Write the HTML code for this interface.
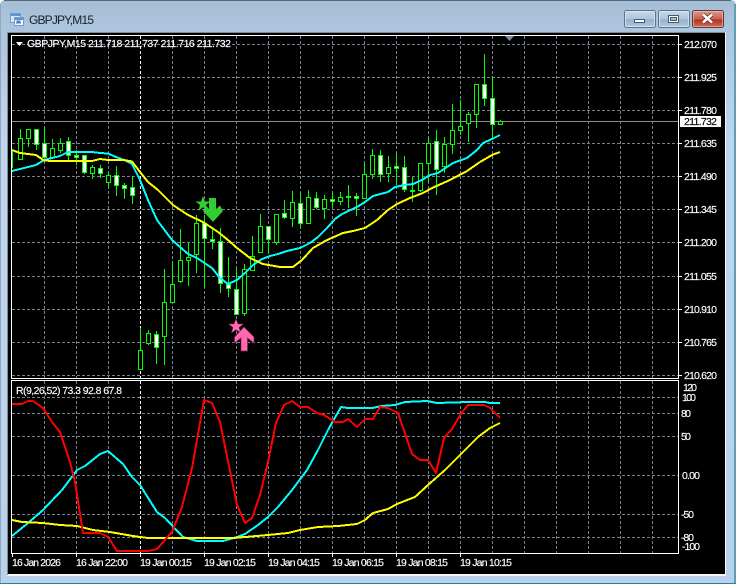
<!DOCTYPE html>
<html><head><meta charset="utf-8"><title>GBPJPY,M15</title>
<style>
html,body{margin:0;padding:0;background:#fff;width:736px;height:584px;overflow:hidden}
svg{display:block}
text{font-family:"Liberation Sans",sans-serif;font-size:10.5px;fill:#fff;stroke:#fff;stroke-width:.15}
.t{font-size:12px;fill:#16202c;stroke:none}
.k{fill:#000;stroke:#000}
</style></head><body>
<svg width="736" height="584" viewBox="0 0 736 584" xmlns="http://www.w3.org/2000/svg">
<defs>
<linearGradient id="bg" x1="0" y1="0" x2="0" y2="1"><stop offset="0" stop-color="#a5bed7"/><stop offset=".06" stop-color="#aec6dd"/><stop offset=".25" stop-color="#c0d6ee"/><stop offset="1" stop-color="#b8d1ec"/></linearGradient>
<linearGradient id="btn" x1="0" y1="0" x2="0" y2="1"><stop offset="0" stop-color="#cbdaea"/><stop offset=".5" stop-color="#aec4db"/><stop offset=".55" stop-color="#97b0ca"/><stop offset="1" stop-color="#b4cbe0"/></linearGradient>
<linearGradient id="cl" x1="0" y1="0" x2="0" y2="1"><stop offset="0" stop-color="#dd9c90"/><stop offset=".5" stop-color="#c8604f"/><stop offset=".55" stop-color="#b5321f"/><stop offset="1" stop-color="#cf6f5c"/></linearGradient>
</defs>
<rect x="0" y="0" width="736" height="584" rx="5" fill="url(#bg)"/>
<g shape-rendering="crispEdges">
<path d="M4 .5H731" stroke="#5c6670" fill="none"/>
<path d="M.5 4V583" stroke="#8fa9c0" fill="none"/>
<path d="M735.5 4V583M734.5 4V583" stroke="#5f9fb5" fill="none"/>
<path d="M0 583.5H736" stroke="#2f8296"/>
<rect x="7" y="32" width="719" height="544" fill="#f4f7fa"/>
<rect x="7" y="32" width="718" height="1" fill="#7f8a96"/>
<rect x="7" y="32" width="1" height="543" fill="#7f8a96"/>
<rect x="8" y="33" width="717" height="541" fill="#000"/>

<!-- grid -->
<path fill="none" stroke="#76838f" stroke-dasharray="3 2" d="M44.5 36V378M76.5 36V378M108.5 36V378M172.5 36V378M204.5 36V378M236.5 36V378M268.5 36V378M300.5 36V378M332.5 36V378M364.5 36V378M396.5 36V378M428.5 36V378M460.5 36V378M492.5 36V378M524.5 36V378M556.5 36V378M588.5 36V378M620.5 36V378M652.5 36V378
M44.5 381V553M76.5 381V553M108.5 381V553M172.5 381V553M204.5 381V553M236.5 381V553M268.5 381V553M300.5 381V553M332.5 381V553M364.5 381V553M396.5 381V553M428.5 381V553M460.5 381V553M492.5 381V553M524.5 381V553M556.5 381V553M588.5 381V553M620.5 381V553M652.5 381V553
M12 44.5H678M12 77.5H678M12 110.5H678M12 143.5H678M12 176.5H678M12 209.5H678M12 242.5H678M12 276.5H678M12 309.5H678M12 342.5H678M12 375.5H678
M12 397.5H678M12 413.5H678M12 436.5H678M12 475.5H678M12 514.5H678M12 537.5H678"/>
<path fill="none" stroke="#fff" stroke-dasharray="3 2" d="M140.5 36V378M140.5 381V553"/>
<path d="M12 121.5H678" stroke="#8a8f94" fill="none"/>

<!-- candles: wicks -->
<path fill="none" stroke="#00ff00" d="M12.5 150V168M20.5 129V159M28.5 129V147M36.5 129V150M44.5 127V158M52.5 139V158M60.5 138V153M68.5 137V162M76.5 150V165M84.5 155V174M92.5 165V179M100.5 165V178M108.5 172V189M116.5 166V196M124.5 183V199M132.5 176V204M140.5 328V369M148.5 330V345M156.5 331V364M164.5 269V365M172.5 261V302M180.5 229V283M188.5 242V286M196.5 215V273M204.5 215V288M212.5 227V249M220.5 228V293M228.5 257V297M236.5 269V314M244.5 264V316M252.5 236V270M260.5 214V252M268.5 226V253M276.5 214V245M284.5 200V219M292.5 191V227M300.5 193V229M308.5 190V223M316.5 192V209M324.5 195V219M332.5 191V208M340.5 192V205M348.5 185V208M356.5 193V216M364.5 163V198M372.5 149V179M380.5 150V182M388.5 156V182M396.5 153V185M404.5 156V192M412.5 177V202M420.5 163V192M428.5 137V182M436.5 130V195M444.5 137V173M452.5 104V154M460.5 100V135M468.5 112V142M476.5 84V128M484.5 54V106M492.5 76V140M500.5 120V124"/>
<!-- candles: black bodies -->
<path fill="#000" stroke="#00ff00" d="M18.5 138.5h4v21h-4zM26.5 129.5h4v9h-4zM50.5 148.5h4v9h-4zM58.5 143.5h4v7h-4zM90.5 167.5h4v6h-4zM106.5 175.5h4v7h-4zM138.5 350.5h4v19h-4zM146.5 333.5h4v10h-4zM162.5 302.5h4v34h-4zM170.5 284.5h4v18h-4zM178.5 260.5h4v21h-4zM186.5 257.5h4v3h-4zM194.5 223.5h4v31h-4zM242.5 269.5h4v44h-4zM250.5 256.5h4v14h-4zM258.5 226.5h4v26h-4zM274.5 214.5h4v28h-4zM290.5 202.5h4v16h-4zM306.5 197.5h4v26h-4zM322.5 199.5h4v9h-4zM338.5 197.5h4v4h-4zM362.5 174.5h4v24h-4zM370.5 155.5h4v19h-4zM386.5 167.5h4v6h-4zM418.5 163.5h4v27h-4zM426.5 143.5h4v20h-4zM442.5 144.5h4v22h-4zM450.5 130.5h4v14h-4zM458.5 126.5h4v4h-4zM466.5 114.5h4v9h-4zM474.5 84.5h4v30h-4zM498.5 121.5h4v3h-4z"/>
<!-- candles: white bodies -->
<path fill="#fff" stroke="#00ff00" d="M34.5 129.5h4v15h-4zM42.5 143.5h4v14h-4zM66.5 141.5h4v14h-4zM74.5 155.5h4v2h-4zM82.5 155.5h4v17h-4zM98.5 168.5h4v5h-4zM114.5 175.5h4v10h-4zM122.5 185.5h4v3h-4zM130.5 187.5h4v8h-4zM154.5 334.5h4v13h-4zM202.5 223.5h4v15h-4zM210.5 239.5h4v2h-4zM218.5 241.5h4v42h-4zM226.5 284.5h4v4h-4zM234.5 289.5h4v25h-4zM266.5 226.5h4v13h-4zM282.5 213.5h4v4h-4zM298.5 203.5h4v20h-4zM314.5 198.5h4v9h-4zM330.5 199.5h4v2h-4zM346.5 196.5h4v1h-4zM354.5 196.5h4v2h-4zM378.5 155.5h4v19h-4zM394.5 166.5h4v2h-4zM402.5 167.5h4v22h-4zM410.5 190.5h4v1h-4zM434.5 141.5h4v28h-4zM482.5 84.5h4v14h-4zM490.5 98.5h4v26h-4z"/>
</g>

<!-- main MAs -->
<g fill="none" stroke-width="2" stroke-linejoin="round" shape-rendering="crispEdges">
<polyline stroke="#00ffff" points="12,171 20,169 28,167 36,165 44,160 52,158 60,156 68,152 76,152 84,152 92,152 100,153 108,153.5 116,157 124,160 132,164 140,180 148,200 157,220 172,240 188,254 197,258 212,268 220,278 228,284 237,280 245,273 253,265 262,259 270,256 278,254 287,251 300,248 310,243 318,237 327,228 335,219 342,214 357,207 365,202 373,196 388,192 395,187 405,185 413,184 422,180 430,175 438,173 447,167 453,163 467,158 477,150 483,143 492,139 500,135"/>
<polyline stroke="#ffff00" points="12,150 20,153 28,154 36,155 44,160.5 52,161 60,161 68,161 76,161 84,161 92,161 100,159 108,160 116,160 124,160 132,161.5 140,172 148,182 158,190 173,205 188,215 203,222 218,232 228,240 237,248 250,258 263,264 280,267 293,267 302,260 313,248 327,240 343,233 353,231 365,228 377,220 388,210 397,204 410,198 423,193 432,188 450,180 467,171 480,162 492,155 500,152"/>
</g>

<!-- arrows -->
<polygon fill="#32cd32" points="203,196 205,201.5 210.5,201.5 206,205 207.7,211 203,207.3 198.3,211 200,205 195.5,201.5 201,201.5"/>
<polygon fill="#32cd32" points="209,198 216,198 216,209 220,205.5 223,211 213,222 203,211 206,205.5 209,209"/>
<polygon fill="#ff69b4" stroke="#7a1f5a" stroke-width=".5" points="236,319 238,324 243.5,324 239,327.5 240.7,333 236,329.7 231.3,333 233,327.5 228.5,324 234,324"/>
<polygon fill="#ff69b4" stroke="#8a1f3a" stroke-width=".7" points="244,327 254,337 254,343 247.5,338 247.5,351 241,351 241,338 234.5,343 234.5,337"/>

<!-- indicator lines -->
<g fill="none" stroke-width="2" stroke-linejoin="round" shape-rendering="crispEdges">
<polyline stroke="#00ffff" points="12,536 28,523 43,510 62,490 77,470 85,466 100,454 108,451 123,464 132,477 140,485 157,512 165,518 183,537 197,541 223,541 237,537 245,534 258,525 268,517 278,507 292,490 307,470 318,450 328,430 341,407 348,408 372,408 382,406 395,405 405,402 427,401 437,403 468,402 485,402 490,403 500,403"/>
<polyline stroke="#ffff00" points="12,520 22,522 43,523 60,525 77,526 93,530 110,532 133,536 148,538 183,538 233,538 245,537 268,535 288,533 300,530 318,527 338,526 357,524 365,520 373,513 388,509 397,504 415,497 428,485 445,470 462,453 478,437 490,428 500,423"/>
<polyline stroke="#ff0000" points="12,404 22,404 28,401 33,401 43,408 52,422 60,432 70,462 75,482 83,533 100,533 108,537 117,551 148,551 157,549 172,532 182,507 192,468 204,400 212,403 220,422 237,505 245,523 252,518 260,495 268,462 276,423 284,405 292,401 300,407 308,407 317,413 324,415 335,422 343,422 348,419 357,427 365,419 373,419 380,407 388,408 398,413 412,454 420,460 428,460 436,473 444,438 452,429 460,415 468,405 484,405 490,408 500,418"/>
</g>

<g shape-rendering="crispEdges">
<path fill="none" stroke="#fff" d="M11.5 35.5H678.5V378.5H11.5ZM11.5 380.5H678.5V553.5H11.5Z"/>
<path fill="none" stroke="#fff" d="M679 44.5h3M679 77.5h3M679 110.5h3M679 143.5h3M679 176.5h3M679 209.5h3M679 242.5h3M679 276.5h3M679 309.5h3M679 342.5h3M679 375.5h3M12.5 554V557M76.5 554V557M140.5 554V557M204.5 554V557M268.5 554V557M332.5 554V557M396.5 554V557M460.5 554V557"/>
<rect x="680" y="116" width="41" height="11" fill="#fff"/>
</g>
<polygon points="505,36 514,36 509.5,41" fill="#7b8ba0"/>
<polygon points="16,42 23,42 19.5,46" fill="#fff"/>

<!-- chart texts -->
<text x="27" y="47" textLength="204" lengthAdjust="spacing">GBPJPY,M15  211.718 211.737 211.716 211.732</text>
<text x="16" y="394" textLength="106" lengthAdjust="spacing">R(9,26,52) 73.3 92.8 67.8</text>
<g>
<text x="684" y="48" textLength="33">212.070</text>
<text x="684" y="81" textLength="33">211.925</text>
<text x="684" y="114" textLength="33">211.780</text>
<text x="684" y="125" textLength="33" class="k">211.732</text>
<text x="684" y="147" textLength="33">211.635</text>
<text x="684" y="180" textLength="33">211.490</text>
<text x="684" y="213" textLength="33">211.345</text>
<text x="684" y="246" textLength="33">211.200</text>
<text x="684" y="280" textLength="33">211.055</text>
<text x="684" y="313" textLength="33">210.910</text>
<text x="684" y="346" textLength="33">210.765</text>
<text x="684" y="379" textLength="33">210.620</text>
<text x="683" y="391" textLength="14">120</text>
<text x="682" y="401" textLength="14">100</text>
<text x="681" y="417" textLength="10">80</text>
<text x="681" y="440" textLength="10">50</text>
<text x="682" y="479" textLength="18">0.00</text>
<text x="681" y="518" textLength="13">-50</text>
<text x="681" y="541" textLength="13">-80</text>
<text x="682" y="550" textLength="18">-100</text>
<text x="12" y="566" textLength="49">16 Jan 2026</text>
<text x="76" y="566" textLength="52">16 Jan 22:00</text>
<text x="140" y="566" textLength="52">19 Jan 00:15</text>
<text x="204" y="566" textLength="52">19 Jan 02:15</text>
<text x="268" y="566" textLength="52">19 Jan 04:15</text>
<text x="332" y="566" textLength="52">19 Jan 06:15</text>
<text x="396" y="566" textLength="52">19 Jan 08:15</text>
<text x="460" y="566" textLength="52">19 Jan 10:15</text>
</g>

<!-- title -->
<text class="t" x="29" y="24" textLength="65" lengthAdjust="spacing">GBPJPY,M15</text>
<g shape-rendering="crispEdges">
<rect x="10.5" y="13.5" width="10" height="9" fill="#dbe8f6" stroke="#6f9bd0"/>
<rect x="11" y="14" width="9" height="2" fill="#5b93d6"/>
<rect x="14.5" y="17.5" width="9" height="8" fill="#f2f7fd" stroke="#6f9bd0"/>
<rect x="15" y="18" width="8" height="2" fill="#5b93d6"/>
<path d="M16 23h1v-2h1v2h1v-2h1v2h1" fill="none" stroke="#4a7fc0"/>
</g>

<!-- buttons -->
<rect x="624.5" y="10.5" width="31" height="17" rx="2" fill="url(#btn)" stroke="#5d7389"/>
<rect x="625.5" y="11.5" width="29" height="15" rx="1" fill="none" stroke="#dfe9f3" stroke-opacity=".7"/>
<rect x="634.5" y="19.5" width="10" height="3" fill="#fff" stroke="#46586c" shape-rendering="crispEdges"/>
<rect x="658.5" y="10.5" width="31" height="17" rx="2" fill="url(#btn)" stroke="#5d7389"/>
<rect x="659.5" y="11.5" width="29" height="15" rx="1" fill="none" stroke="#dfe9f3" stroke-opacity=".7"/>
<rect x="668.5" y="15.5" width="10" height="7" fill="none" stroke="#46586c" stroke-width="1" shape-rendering="crispEdges"/>
<rect x="669.5" y="16.5" width="8" height="5" fill="none" stroke="#fff" shape-rendering="crispEdges"/>
<rect x="670.5" y="17.5" width="6" height="3" fill="none" stroke="#46586c" shape-rendering="crispEdges"/>
<rect x="692.5" y="10.5" width="31" height="17" rx="2" fill="url(#cl)" stroke="#5a3a36"/>
<rect x="693.5" y="11.5" width="29" height="15" rx="1" fill="none" stroke="#eec7bf" stroke-opacity=".6"/>
<path d="M703 14.5 L712 22.5 M712 14.5 L703 22.5" stroke="#4a2a26" stroke-width="4" fill="none"/>
<path d="M703 14.5 L712 22.5 M712 14.5 L703 22.5" stroke="#fff" stroke-width="2.6" fill="none"/>
</svg>
</body></html>
